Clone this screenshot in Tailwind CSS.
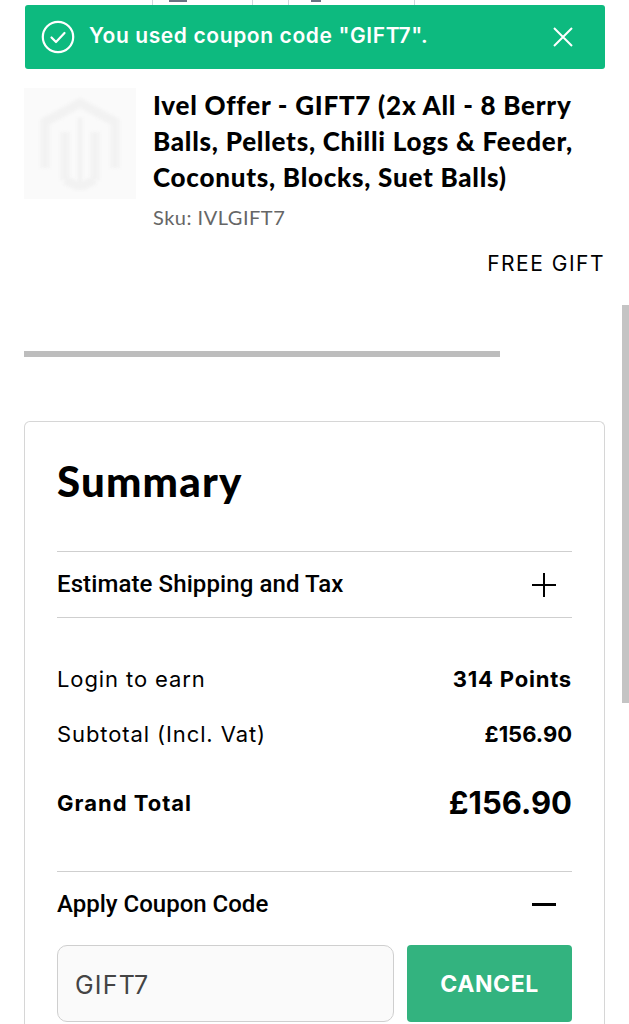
<!DOCTYPE html>
<html lang="en">
<head>
    <meta charset="UTF-8">
    <meta name="viewport" content="width=device-width, initial-scale=1.0">
    <title>Shopping Cart</title>
    <script src="https://cdn.jsdelivr.net/npm/@tailwindcss/browser@4"></script>
</head>
<body class="relative h-[1024px] overflow-hidden bg-white font-['Inter',sans-serif] text-black">
    <!-- Table row cut off behind the message -->
    <div class="flex h-[5px] pl-[152px]">
        <div class="w-[100px] border-l border-gray-300 pl-[16px]"><div class="h-[2px] w-[18px] bg-gray-500"></div></div>
        <div class="w-[36px] border-l border-gray-300"></div>
        <div class="w-[127px] border-x border-gray-300 pl-[22px]"><div class="h-[2px] w-[10px] bg-gray-500"></div></div>
    </div>

    <!-- Success message -->
    <div class="ml-[25px] mr-[24px] flex h-[64px] items-center rounded-[3px] bg-[#0dba7f] pl-[16px] pr-[32px] text-white">
        <svg class="h-[34px] w-[34px] shrink-0" viewBox="0 0 34 34" fill="none" stroke="currentColor">
            <circle cx="17" cy="17" r="15.2" stroke-width="2.2"/>
            <path d="M10.5 17.5l4.5 4.5 8.5-9" stroke-width="2.2" stroke-linecap="round" stroke-linejoin="round"/>
        </svg>
        <p class="ml-[14px] flex-1 whitespace-nowrap pb-[2px] text-[21px] font-semibold tracking-[0.6px]">You used coupon code "GIFT7".</p>
        <svg class="h-[20px] w-[20px]" viewBox="0 0 20 20" stroke="currentColor" stroke-width="2"><path d="M1 1l18 18M19 1L1 19"/></svg>
    </div>

    <!-- Product -->
    <div class="mx-[24px] mt-[18px] flex gap-[17px]">
        <div class="mt-[1px] flex h-[111px] w-[112px] shrink-0 items-center justify-center overflow-hidden bg-[#fafafa]">
            <svg class="h-[92px] w-[80px] blur-[1.5px]" viewBox="0 0 80 92" fill="none" stroke="#f2f2f2" stroke-width="9">
                <path d="M5 70V24L40 5l35 19v46"/>
                <path d="M25 82V34M55 82V34M25 82l15 7 15-7"/>
                <path d="M40 20v66" stroke-width="5"/>
            </svg>
        </div>
        <div class="min-w-0">
            <h2 class="whitespace-nowrap font-['Lato',sans-serif] text-[26px] leading-[36px] font-black tracking-[0.75px]">Ivel Offer - GIFT7 (2x All - 8 Berry<br>Balls, Pellets, Chilli Logs &amp; Feeder,<br>Coconuts, Blocks, Suet Balls)</h2>
            <p class="mt-[10px] font-['Lato',sans-serif] text-[20px] leading-[24px] tracking-[0.5px] text-[#666]">Sku: IVLGIFT7</p>
        </div>
    </div>
    <p class="mr-[24px] mt-[22px] text-right text-[21px] leading-[26px] tracking-[1.5px]">FREE GIFT</p>

    <!-- Horizontal scroll indicator -->
    <div class="ml-[24px] mt-[74px] h-[6px] w-[476px] bg-[#bdbdbd]"></div>

    <!-- Summary, cut off by the bottom of the screen -->
    <section class="mx-[24px] mt-[64px] h-[603px] rounded-t-[6px] border border-b-0 border-[#d6d6d6] px-[32px] pt-[33px]">
        <h2 class="font-['Lato',sans-serif] text-[42px] leading-[52px] font-black tracking-[1.2px]">Summary</h2>

        <div class="mt-[44px] flex h-[67px] items-center justify-between border-y border-[#cfcfcf] pr-[16px]">
            <span class="pb-[2px] font-['Roboto',sans-serif] text-[24px] font-medium tracking-[0.1px]">Estimate Shipping and Tax</span>
            <svg class="h-[24px] w-[24px]" viewBox="0 0 24 24" stroke="currentColor" stroke-width="2"><path d="M12 0v24M0 12h24"/></svg>
        </div>

        <div class="mt-[43px] flex items-center justify-between text-[22px] leading-[36px]">
            <span class="tracking-[0.9px]">Login to earn</span>
            <span class="font-bold tracking-[0.8px]">314 Points</span>
        </div>
        <div class="mt-[19px] flex items-center justify-between text-[22px] leading-[36px]">
            <span class="tracking-[0.9px]">Subtotal (Incl. Vat)</span>
            <span class="font-bold">£156.90</span>
        </div>
        <div class="mt-[31px] flex items-center justify-between">
            <span class="text-[22px] font-bold tracking-[1px]">Grand Total</span>
            <span class="text-[31px] leading-[40px] font-bold">£156.90</span>
        </div>

        <div class="mt-[48px] flex h-[66px] items-center justify-between border-t border-[#cfcfcf] pr-[16px]">
            <span class="pb-[2px] font-['Roboto',sans-serif] text-[24px] font-medium">Apply Coupon Code</span>
            <div class="h-[3px] w-[24px] bg-black"></div>
        </div>

        <div class="mt-[8px] flex gap-[13px]">
            <input value="GIFT7" class="h-[77px] w-[337px] rounded-[10px] border border-[#cfcfcf] bg-[#fafafa] px-[17px] pt-[2px] text-[25px] tracking-[1.2px] text-[#444]">
            <button class="h-[77px] flex-1 rounded-[4px] bg-[#33b37f] pt-[2px] text-[23px] font-bold tracking-wide text-white">CANCEL</button>
        </div>
    </section>

    <!-- Vertical scrollbar thumb, over the page -->
    <div class="absolute right-0 top-[305px] h-[398px] w-[7px] bg-[#c4c4c4]"></div>
</body>
</html>
